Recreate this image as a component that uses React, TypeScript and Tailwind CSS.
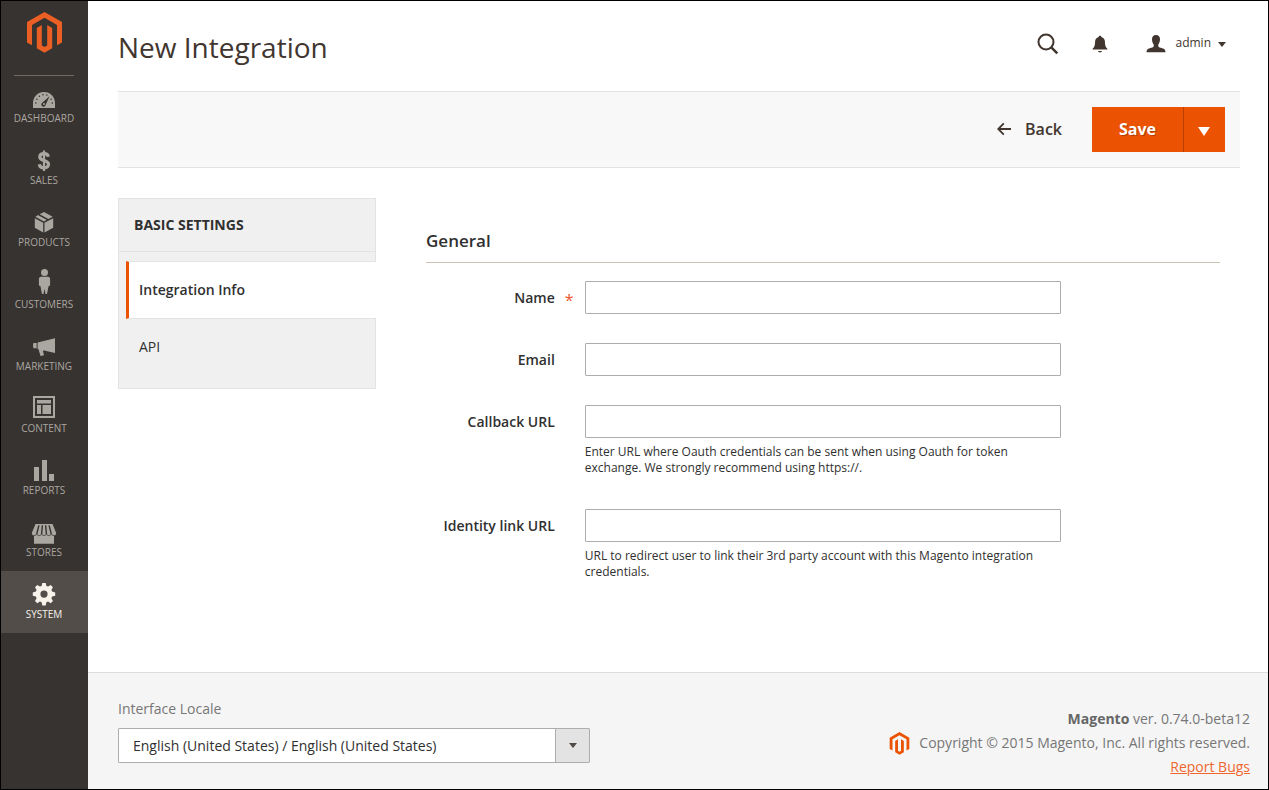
import React from "react";

type IconProps = { children: React.ReactNode };

function NavIcon({ children }: IconProps) {
  return (
    <svg width="28" height="30" viewBox="0 0 28 30" fill="currentColor" aria-hidden="true">
      {children}
    </svg>
  );
}

function MagentoLogo({ className }: { className: string }) {
  return (
    <svg viewBox="0 0 35 41" className={className} fill="currentColor" aria-hidden="true">
      <path d="M17.5 0 35 10.1v20.4l-5 2.7V13L17.5 5.8 5 13v20.2l-5-2.7V10.1Z" />
      <path d="m9.8 15.9 5-2.9v20.6l2.7 1.5 2.7-1.5V13l5 2.9v20.4l-7.7 4.4-7.7-4.4Z" />
    </svg>
  );
}

const navItems = [
  {
    label: "Dashboard",
    icon: (
      <>
        <path d="M14 10C7.9 10 3 14.9 3 21v5h22v-5c0-6.100-4.900-11-11-11Z" />
        <g fill="#373330">
          <path d="m19.600 14.200-3.900 8.600a2.200 2.200 0 1 1-3.200-2.200Z" />
          <circle cx="5.800" cy="21" r=".8" />
          <circle cx="6.900" cy="17.300" r=".8" />
          <circle cx="9.400" cy="14.300" r=".8" />
          <circle cx="13" cy="12.800" r=".8" />
          <circle cx="16.800" cy="13" r=".8" />
          <circle cx="21.200" cy="17.300" r=".8" />
          <circle cx="22.300" cy="21" r=".8" />
        </g>
        <circle cx="14" cy="22" r="1" />
      </>
    ),
  },
  {
    label: "Sales",
    icon: (
      <g fill="none" stroke="currentColor">
        <path strokeWidth="3.200" d="M18.300 12.800c-.3-2.100-1.800-3.100-4.300-3.100-2.500 0-4.200 1.100-4.200 3.200 0 4.800 8.700 2.500 8.700 7.400 0 2.300-1.900 3.500-4.500 3.500-2.800 0-4.400-1.200-4.700-3.600" />
        <path strokeWidth="2.200" d="M14 6.500v20.500" />
      </g>
    ),
  },
  {
    label: "Products",
    icon: (
      <>
        <path d="M4.800 12.200 13.200 16.800v9.700l-8.400-4.800Z" />
        <path d="m23.200 12.200-8.700 4.600v9.700l8.700-4.800Z" />
        <path d="m5.300 10.700 2.900-1.600 8.700 4.700-3 1.700Z" />
        <path d="M9.600 8.300 14 6l8.700 4.700-4.400 2.400Z" />
        <path stroke="#373330" strokeWidth="1" d="m8 8.400 9.800 5.400" />
      </>
    ),
  },
  {
    label: "Customers",
    icon: (
      <>
        <circle cx="14.500" cy="4.600" r="3.500" />
        <path d="M11 8.800h7c1.500 0 2.100 1 2.100 2.500v5.300c0 1.100-.6 1.500-1.500 1.500L17 26h-1.500l-1-5.200-1 5.200H12l-1.600-7.900c-.9 0-1.500-.4-1.500-1.500v-5.300c0-1.500.6-2.500 2.100-2.500Z" />
      </>
    ),
  },
  {
    label: "Marketing",
    icon: (
      <>
        <path d="M3.600 13h3v5.300h-3l-.5-1v-3.300Z" />
        <path d="M7.600 12.500 25 8.300V23l-11-2.400-1.100.2 1.100 4.400-3.500.8-2-6.700-.9-.3Z" />
      </>
    ),
  },
  {
    label: "Content",
    icon: (
      <>
        <path fillRule="evenodd" d="M3 4h22v22H3Zm2 2v18h18V6Z" />
        <path d="M7 8h14v3.500H7ZM7 13h4v9H7ZM12.500 13H21v9h-8.500Z" />
      </>
    ),
  },
  {
    label: "Reports",
    icon: <path d="M4 13h5v14H4ZM12 6h5v21h-5ZM19 20h5v7h-5Z" />,
  },
  {
    label: "Stores",
    icon: (
      <>
        <path d="M5.500 8h17l3.700 9c0 1.600-.9 2.500-2.200 2.500v8.300H4v-8.300C2.700 19.500 1.800 18.600 1.800 17Z" />
        <g stroke="#373330" fill="none" strokeWidth="1.400">
          <path d="M8.900 9.300 6.700 18M12.400 9.300 11.600 18M15.600 9.300l.8 8.700M19.100 9.300l2.200 8.700" />
          <path strokeWidth=".8" d="M4 19.500c1.500 0 2.300-.6 2.700-1.500.9 2 4 2 4.900 0 .9 2 3.900 2 4.800 0 .9 2 4 2 4.900 0 .4.900 1.200 1.500 2.700 1.500" />
        </g>
      </>
    ),
  },
  {
    label: "System",
    active: true,
    icon: (
      <path
        fillRule="evenodd"
        d="M12.300 5h3.400l.7 2.900 1.700.7 2.600-1.500 2.200 2.200-1.500 2.600.7 1.700 3.100.8v3.400l-3.100.8-.7 1.700 1.500 2.600-2.200 2.300-2.600-1.600-1.700.7-.7 3.200h-3.400l-.7-3.200-1.700-.7-2.600 1.600-2.300-2.300 1.600-2.600-.7-1.700-3.100-.8v-3.400l3.100-.8.7-1.700L5 9.300l2.300-2.200 2.600 1.500 1.700-.7ZM14 12.500a3.600 3.600 0 1 0 0 7.200 3.600 3.600 0 0 0 0-7.200Z"
      />
    ),
  },
];

function Sidebar() {
  return (
    <aside className="flex w-[87px] shrink-0 flex-col bg-[#373330]">
      <a href="#home" aria-label="Magento home" className="ml-[13px] flex h-[75px] w-[60px] justify-center border-b border-[#736963] pt-[11px] text-[#eb5f25]">
        <MagentoLogo className="h-[41px] w-[35px]" />
      </a>
      <nav className="-mt-px">
        {navItems.map((item) => (
          <a
            key={item.label}
            href={`#${item.label.toLowerCase()}`}
            className={
              item.active
                ? "flex h-[62px] flex-col items-center bg-[#524d49] pt-[7px] pr-px text-[#f7f3eb]"
                : "flex h-[62px] flex-col items-center pt-[7px] pr-px text-[#aaa6a0]"
            }
          >
            <NavIcon>{item.icon}</NavIcon>
            <span className="text-[10px] leading-3 uppercase">{item.label}</span>
          </a>
        ))}
      </nav>
    </aside>
  );
}

function Header() {
  return (
    <header className="flex h-[90px] items-start justify-between pr-[42px] pl-[30px]">
      <h1 className="pt-7 text-[28px] leading-9 text-[#41362f]">New Integration</h1>
      <div className="flex items-center pt-8 text-[#41362f]">
        <button type="button" aria-label="Search" className="mr-[33px]">
          <svg width="22" height="22" viewBox="0 0 22 22" fill="none" stroke="currentColor" aria-hidden="true">
            <circle cx="9" cy="9" r="7.500" strokeWidth="2" />
            <path d="m14.300 14.300 6 6" strokeWidth="2.600" />
          </svg>
        </button>
        <button type="button" aria-label="Notifications" className="mr-[38px]">
          <svg width="16" height="18" viewBox="0 0 16 18" fill="currentColor" aria-hidden="true">
            <path d="M8 .8c.8 0 1.300.4 1.400 1.100 2.300.6 3.400 2.300 3.500 4.700.1 3.600.6 5.700 2.600 7.400v.6H.5V14c2-1.700 2.500-3.800 2.600-7.400.1-2.400 1.200-4.100 3.500-4.700C6.700 1.200 7.200.8 8 .8ZM6 16h4c-.3 1-1 1.400-2 1.400S6.300 17 6 16Z" />
          </svg>
        </button>
        <button type="button" className="flex items-center text-xs">
          <svg width="20" height="18" viewBox="0 0 20 18" className="mr-[9px]" fill="currentColor" aria-hidden="true">
            <path d="M10 0c2.700 0 4 1.600 4 4.300 0 2.200-.7 4-1.700 5.100v1.800c.4 1 1.900 1.400 3.900 2 2.300.7 3.300 1.500 3.300 4.100H.5c0-2.600 1-3.400 3.300-4.100 2-.6 3.500-1 3.900-2V9.400C6.700 8.300 6 6.500 6 4.300 6 1.600 7.300 0 10 0Z" />
          </svg>
          <span className="pb-[3px]">admin</span>
          <svg width="8" height="5" viewBox="0 0 8 5" className="ml-[7px]" fill="currentColor" aria-hidden="true">
            <path d="M0 0h8L4 5Z" />
          </svg>
        </button>
      </div>
    </header>
  );
}

function ActionBar() {
  return (
    <div className="mr-[28px] ml-[30px] flex h-[77px] items-center justify-end border-y border-[#e3e3e3] bg-[#f8f8f8] pr-[15px]">
      <button type="button" className="mr-[30px] flex items-center gap-[14px] pb-[2px] text-base font-semibold text-[#41362f]">
        <svg width="14" height="14" viewBox="0 0 14 14" fill="none" stroke="currentColor" strokeWidth="1.800" aria-hidden="true">
          <path d="M14 7H1.500M6.800 1.300 1.200 7l5.600 5.700" />
        </svg>
        Back
      </button>
      <div className="flex h-[45px] text-white">
        <button type="button" className="w-[91px] bg-[#eb5202] pb-[2px] text-base font-bold [text-shadow:1px_1px_0_rgba(0,0,0,0.25)]">
          Save
        </button>
        <button type="button" aria-label="More save options" className="flex w-[42px] items-center justify-center border-l border-[#b84002] bg-[#eb5202] pt-[3px] pr-px">
          <svg width="12" height="9" viewBox="0 0 12 9" fill="currentColor" aria-hidden="true">
            <path d="M0 0h12L6 9Z" />
          </svg>
        </button>
      </div>
    </div>
  );
}

function SettingsTabs() {
  return (
    <nav aria-label="Basic settings" className="w-[258px] shrink-0 text-sm text-[#303030]">
      <div className="border border-[#e3e3e3] bg-[#f0f0f0]">
        <h2 className="flex h-[53px] items-center border-b border-[#e3e3e3] px-[15px] text-sm font-bold uppercase">
          Basic Settings
        </h2>
        <div className="-mr-px pt-[9px] pb-[13px] pl-[7px]">
          <a href="#info" aria-current="page" className="flex h-[58px] items-center border-y border-l-[3px] border-y-[#e3e3e3] border-l-[#eb5202] bg-white pl-[10px] font-semibold">
            Integration Info
          </a>
          <a href="#api" className="flex h-14 items-center pl-[13px]">
            API
          </a>
        </div>
      </div>
    </nav>
  );
}

const fields = [
  { id: "name", label: "Name", required: true, note: "" },
  { id: "email", label: "Email", required: false, note: "" },
  {
    id: "callback",
    label: "Callback URL",
    required: false,
    note: "Enter URL where Oauth credentials can be sent when using Oauth for token exchange. We strongly recommend using https://.",
  },
  {
    id: "identity",
    label: "Identity link URL",
    required: false,
    note: "URL to redirect user to link their 3rd party account with this Magento integration credentials.",
  },
];

function GeneralForm() {
  return (
    <form className="mt-[30px] flex-1 text-[#303030]">
      <h2 className="border-b border-[#cac3b4] pb-[8px] text-[17px] leading-[26px] font-semibold">General</h2>
      <div className="flex flex-col gap-[29px] pt-[18px]">
        {fields.map((field) => (
          <div key={field.id} className="grid grid-cols-[20%_60%]">
            <label htmlFor={field.id} className="flex h-[33px] items-center justify-end pr-[11px] text-sm font-semibold">
              {field.label}
              <span className="w-[19px] pt-[5px] pl-[10px] text-base leading-4 font-normal text-[#f0562d]">
                {field.required ? "*" : ""}
              </span>
            </label>
            <div>
              <input
                id={field.id}
                type="text"
                required={field.required}
                className="block h-[33px] w-full rounded-[1px] border border-[#adadad] bg-white px-[9px] text-sm"
              />
              {field.note && <p className="pt-[6px] pb-1 text-xs leading-4">{field.note}</p>}
            </div>
          </div>
        ))}
      </div>
    </form>
  );
}

function Footer() {
  return (
    <footer className="mt-auto flex h-[117px] items-start justify-between border-t border-[#dcdcdc] bg-[#f5f5f5] pr-[18px] pl-[30px] text-sm text-[#777777]">
      <div className="w-[472px] pt-[26px]">
        <label htmlFor="locale" className="block leading-5">
          Interface Locale
        </label>
        <div className="relative mt-[9px]">
          <select
            id="locale"
            className="block h-[35px] w-full appearance-none rounded-[1px] border border-[#adadad] bg-white pr-10 pl-[14px] text-sm text-[#303030]"
          >
            <option>English (United States) / English (United States)</option>
          </select>
          <span className="pointer-events-none absolute inset-y-px right-px flex w-[34px] items-center justify-center border-l border-[#adadad] bg-[#e3e3e3] text-[#514943]">
            <svg width="8" height="5" viewBox="0 0 8 5" fill="currentColor" aria-hidden="true">
              <path d="M0 0h8L4 5Z" />
            </svg>
          </span>
        </div>
      </div>
      <div className="flex flex-col items-end pt-[34px] leading-6">
        <p>
          <strong className="font-bold text-[#666666]">Magento</strong> ver. 0.74.0-beta12
        </p>
        <p className="flex items-center gap-[9px]">
          <span className="text-[#eb5202]">
            <MagentoLogo className="h-[23px] w-[21px]" />
          </span>
          Copyright © 2015 Magento, Inc. All rights reserved.
        </p>
        <a href="#bugs" className="text-[#ef672f] underline">
          Report Bugs
        </a>
      </div>
    </footer>
  );
}

export default function App() {
  return (
    <div className="flex min-h-screen border border-black bg-white font-['Open_Sans',sans-serif]">
      <Sidebar />
      <div className="flex min-w-0 flex-1 flex-col">
        <Header />
        <ActionBar />
        <main className="flex items-start gap-[50px] pt-[30px] pr-[48px] pb-10 pl-[30px]">
          <SettingsTabs />
          <GeneralForm />
        </main>
        <Footer />
      </div>
    </div>
  );
}
